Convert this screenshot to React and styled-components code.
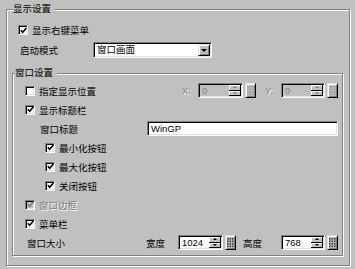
import React from 'react';
import styled, { createGlobalStyle } from 'styled-components';

const GlobalStyle = createGlobalStyle`
  html, body {
    margin: 0;
    padding: 0;
    background: #c0c0c0;
  }
  body {
    font-family: "Liberation Sans", "Noto Sans CJK SC", sans-serif;
    font-size: 9.5px;
    color: #000;
  }
`;

const Panel = styled.div`
  width: 355px;
  height: 269px;
  box-sizing: border-box;
  padding: 2px 5px 0 6px;
  background: #c0c0c0;
  overflow: hidden;
`;

const Group = styled.fieldset`
  margin: ${(p) => p.$margin};
  padding: ${(p) => p.$padding};
  min-width: 0;
  border: 1px solid #808080;
  box-shadow: inset 1px 1px 0 #fff, 1px 1px 0 #fff;
`;

const Legend = styled.legend`
  margin-left: ${(p) => p.$offset}px;
  padding: 0 4px 0 0;
  line-height: 14px;
  background: #c0c0c0;
`;

const Row = styled.div`
  display: flex;
  align-items: center;
  height: ${(p) => p.$h || 19}px;
  padding-left: ${(p) => p.$indent || 0}px;
  padding-right: 4px;
`;

const Text = styled.span`
  white-space: nowrap;
  color: ${(p) => (p.$disabled ? '#808080' : '#000')};
  text-shadow: ${(p) => (p.$disabled ? '1px 1px 0 #fff' : 'none')};
`;

const Label = styled(Text)`
  flex: none;
  width: ${(p) => p.$w}px;
  margin-left: ${(p) => p.$gap || 0}px;
`;

const Box = styled.span`
  flex: none;
  width: 10px;
  height: 10px;
  box-sizing: border-box;
  margin-right: 4px;
  border: 1px solid;
  border-color: #808080 #fff #fff #808080;
  box-shadow: inset 1px 1px 0 #000, inset -1px -1px 0 #dfdfdf;
  background: ${(p) => (p.$disabled ? '#c0c0c0' : '#fff')};
  display: flex;
  align-items: center;
  justify-content: center;
`;

const Sunken = styled.div`
  display: flex;
  align-items: center;
  flex: none;
  box-sizing: border-box;
  width: ${(p) => p.$w}px;
  height: ${(p) => p.$h || 15}px;
  border: 1px solid;
  border-color: #808080 #fff #fff #808080;
  box-shadow: inset 1px 1px 0 #000, inset -1px -1px 0 #dfdfdf;
  background: ${(p) => (p.$disabled ? '#c0c0c0' : '#fff')};
  padding: 1px 1px 1px 1px;
`;

const Value = styled.span`
  flex: 1;
  padding-left: 2px;
  line-height: 12px;
  white-space: nowrap;
  color: ${(p) => (p.$disabled ? '#808080' : '#000')};
`;

const Raised = styled.span`
  display: flex;
  align-items: center;
  justify-content: center;
  box-sizing: border-box;
  background: #c0c0c0;
  border: 1px solid;
  border-color: #dfdfdf #000 #000 #dfdfdf;
  box-shadow: inset 1px 1px 0 #fff, inset -1px -1px 0 #808080;
`;

const ArrowButton = styled(Raised)`
  flex: none;
  width: 12px;
  height: 12px;
`;

const Stepper = styled.div`
  flex: none;
  display: flex;
  flex-direction: column;
  width: 12px;
  height: 100%;
`;

const StepButton = styled(Raised)`
  flex: 1;
  border-width: 0 1px 1px 0;
  border-color: #000;
  box-shadow: inset 1px 1px 0 #fff;
`;

const Tri = styled.span`
  width: 0;
  height: 0;
  border-left: ${(p) => p.$s}px solid transparent;
  border-right: ${(p) => p.$s}px solid transparent;
  ${(p) => (p.$up ? 'border-bottom' : 'border-top')}: ${(p) => p.$s}px solid
    ${(p) => (p.$disabled ? '#808080' : '#000')};
`;

const Keypad = styled(Raised)`
  flex: none;
  width: 11px;
  height: 15px;
  margin-left: 2px;
`;

const Fields = styled.div`
  display: flex;
  align-items: center;
  margin-left: auto;
`;

function Check({ checked, disabled, children }) {
  return (
    <>
      <Box $disabled={disabled}>
        {checked && (
          <svg width="7" height="7" viewBox="0 0 7 7">
            <path
              d="M0.8 3.2 L2.7 5.2 L6.3 1"
              fill="none"
              stroke={disabled ? '#808080' : '#000'}
              strokeWidth="1.6"
            />
          </svg>
        )}
      </Box>
      <Text $disabled={disabled}>{children}</Text>
    </>
  );
}

function KeypadIcon({ disabled }) {
  const c = disabled ? '#9a9a9a' : '#404040';
  const cells = [];
  for (let r = 0; r < 4; r++) {
    for (let k = 0; k < 3; k++) {
      cells.push(<rect key={r + '-' + k} x={k * 2.5} y={r * 2.5} width="1.6" height="1.6" fill={c} />);
    }
  }
  return (
    <svg width="7" height="10" viewBox="0 0 7 10">
      {cells}
    </svg>
  );
}

function SpinField({ w, value, disabled }) {
  return (
    <>
      <Sunken $w={w} $disabled={disabled}>
        <Value $disabled={disabled}>{value}</Value>
        <Stepper>
          <StepButton>
            <Tri $up $s={2} $disabled={disabled} />
          </StepButton>
          <StepButton>
            <Tri $s={2} $disabled={disabled} />
          </StepButton>
        </Stepper>
      </Sunken>
      <Keypad>
        <KeypadIcon disabled={disabled} />
      </Keypad>
    </>
  );
}

export default function App() {
  return (
    <Panel>
      <GlobalStyle />
      <Group $margin="0" $padding="4px 0 9px 0">
        <Legend $offset={6}>显示设置</Legend>
        <Row $h={20} $indent={11}>
          <Check checked>显示右键菜单</Check>
        </Row>
        <Row $h={20} $indent={13}>
          <Label $w={73}>启动模式</Label>
          <Sunken $w={119} $h={16}>
            <Value>窗口画面</Value>
            <ArrowButton>
              <Tri $s={3} />
            </ArrowButton>
          </Sunken>
        </Row>

        <Group $margin="6px 6px 0 5px" $padding="1px 0 3px 0">
          <Legend $offset={2}>窗口设置</Legend>
          <Row $indent={12}>
            <Check>指定显示位置</Check>
            <Fields>
              <Label $w={16} $disabled>X:</Label>
              <SpinField w={45} value="0" disabled />
              <Label $w={16} $gap={9} $disabled>Y:</Label>
              <SpinField w={44} value="0" disabled />
            </Fields>
          </Row>
          <Row $indent={12}>
            <Check checked>显示标题栏</Check>
          </Row>
          <Row $indent={27}>
            <Label $w={107}>窗口标题</Label>
            <Sunken $w={191}>
              <Value>WinGP</Value>
            </Sunken>
          </Row>
          <Row $indent={32}>
            <Check checked>最小化按钮</Check>
          </Row>
          <Row $indent={32}>
            <Check checked>最大化按钮</Check>
          </Row>
          <Row $indent={32}>
            <Check checked>关闭按钮</Check>
          </Row>
          <Row $indent={12}>
            <Check checked disabled>窗口边框</Check>
          </Row>
          <Row $indent={12}>
            <Check checked>菜单栏</Check>
          </Row>
          <Row $indent={14}>
            <Text>窗口大小</Text>
            <Fields>
              <Label $w={32}>宽度</Label>
              <SpinField w={45} value="1024" />
              <Label $w={38} $gap={7}>高度</Label>
              <SpinField w={44} value="768" />
            </Fields>
          </Row>
        </Group>
      </Group>
    </Panel>
  );
}
